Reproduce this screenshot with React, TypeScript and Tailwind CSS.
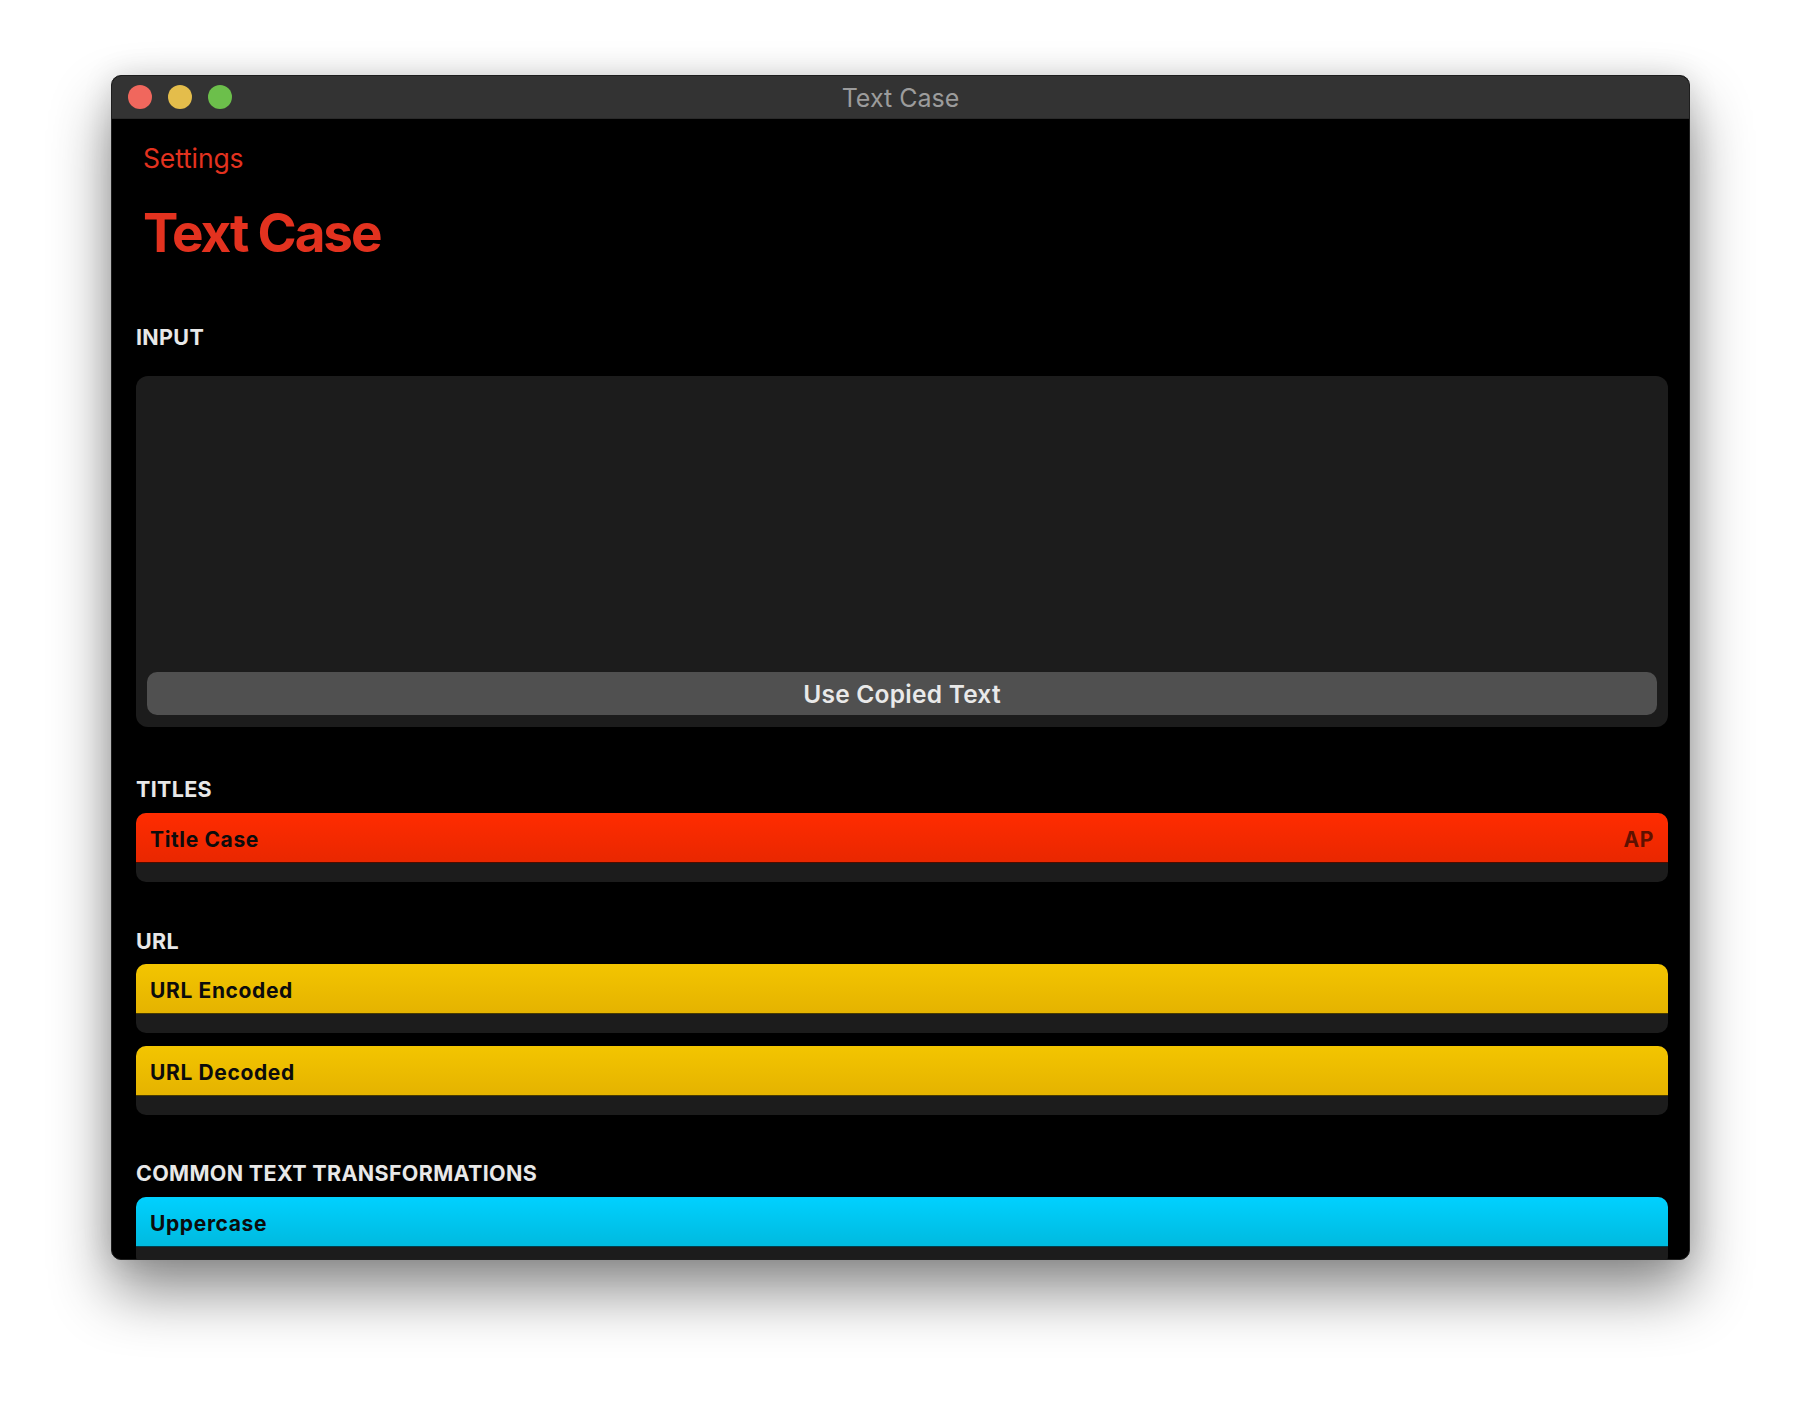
import React from "react";

type Row = {
  label: string;
  tone: "red" | "yellow" | "cyan";
  badge?: string;
};

const tones = {
  red: "bg-gradient-to-b from-[#ff2c00] to-[#e92700]",
  yellow: "bg-gradient-to-b from-[#f3c500] to-[#e5b300]",
  cyan: "bg-gradient-to-b from-[#00d1ff] to-[#00badf]",
};

function SectionLabel({ children, className = "" }: { children: React.ReactNode; className?: string }) {
  return (
    <div className={`h-[26px] leading-[26px] text-[21.5px] font-bold tracking-[0.015em] text-[#e8e8e8] ${className}`}>
      {children}
    </div>
  );
}

function TransformCard({ label, tone, badge }: Row) {
  return (
    <div className="rounded-[10px] overflow-hidden bg-[#1c1c1c] shrink-0">
      <div
        className={`${tones[tone]} h-[50px] flex items-center justify-between px-[14px] pt-[4px] border-b border-black/70`}
      >
        <span className="text-[21px] font-bold tracking-[0.03em] text-[#0c0c0c]">{label}</span>
        {badge && (
          <span className="text-[21px] font-bold tracking-[0.03em] text-[#5e1100]">{badge}</span>
        )}
      </div>
      <div className="h-[19px]" />
    </div>
  );
}

export default function App() {
  return (
    <div
      className="w-[1802px] h-[1408px] bg-white pt-[75px] pl-[111px]"
      style={{ fontFamily: "Inter, 'Liberation Sans', sans-serif" }}
    >
      <div className="w-[1579px] h-[1185px] rounded-[10px] overflow-hidden border border-[#1e1e1e] bg-black flex flex-col shadow-[0_32px_60px_rgba(0,0,0,0.45),0_0_30px_rgba(0,0,0,0.12)]">
        {/* title bar */}
        <div className="relative h-[43px] shrink-0 bg-[#333333] flex items-center pl-[16px] border-b border-[#2a2a2a]">
          <div className="flex gap-[16px]">
            <span className="w-[24px] h-[24px] rounded-full bg-[#f0675d]" />
            <span className="w-[24px] h-[24px] rounded-full bg-[#e4bd4b]" />
            <span className="w-[24px] h-[24px] rounded-full bg-[#6cbf4b]" />
          </div>
          <div className="absolute inset-0 pt-[4px] flex items-center justify-center text-[25px] text-[#9c9c9c]">
            Text Case
          </div>
        </div>

        {/* content */}
        <div className="flex-1 flex flex-col pl-[24px] pr-[21px] overflow-hidden">
          <div className="mt-[22px] pl-[7px] h-[34px] leading-[34px] text-[26.5px] tracking-[-0.005em] text-[#e3321f]">
            Settings
          </div>
          <div className="mt-[26px] pl-[7px] h-[64px] leading-[64px] text-[53px] font-bold tracking-[-0.04em] text-[#e3321f]">
            Text Case
          </div>

          <SectionLabel className="mt-[59px]">INPUT</SectionLabel>
          <div className="mt-[26px] h-[351px] shrink-0 rounded-[12px] bg-[#1c1c1c] flex flex-col justify-end px-[11px] pb-[12px]">
            <button className="h-[43px] w-full rounded-[10px] bg-[#505050] pt-[2px] text-[24.5px] font-semibold tracking-[0.01em] text-[#e9e9e9]">
              Use Copied Text
            </button>
          </div>

          <SectionLabel className="mt-[49px]">TITLES</SectionLabel>
          <div className="mt-[11px]">
            <TransformCard label="Title Case" tone="red" badge="AP" />
          </div>

          <SectionLabel className="mt-[46px]">URL</SectionLabel>
          <div className="mt-[10px] flex flex-col gap-[13px]">
            <TransformCard label="URL Encoded" tone="yellow" />
            <TransformCard label="URL Decoded" tone="yellow" />
          </div>

          <SectionLabel className="mt-[45px]">COMMON TEXT TRANSFORMATIONS</SectionLabel>
          <div className="mt-[11px]">
            <TransformCard label="Uppercase" tone="cyan" />
          </div>
        </div>
      </div>
    </div>
  );
}
